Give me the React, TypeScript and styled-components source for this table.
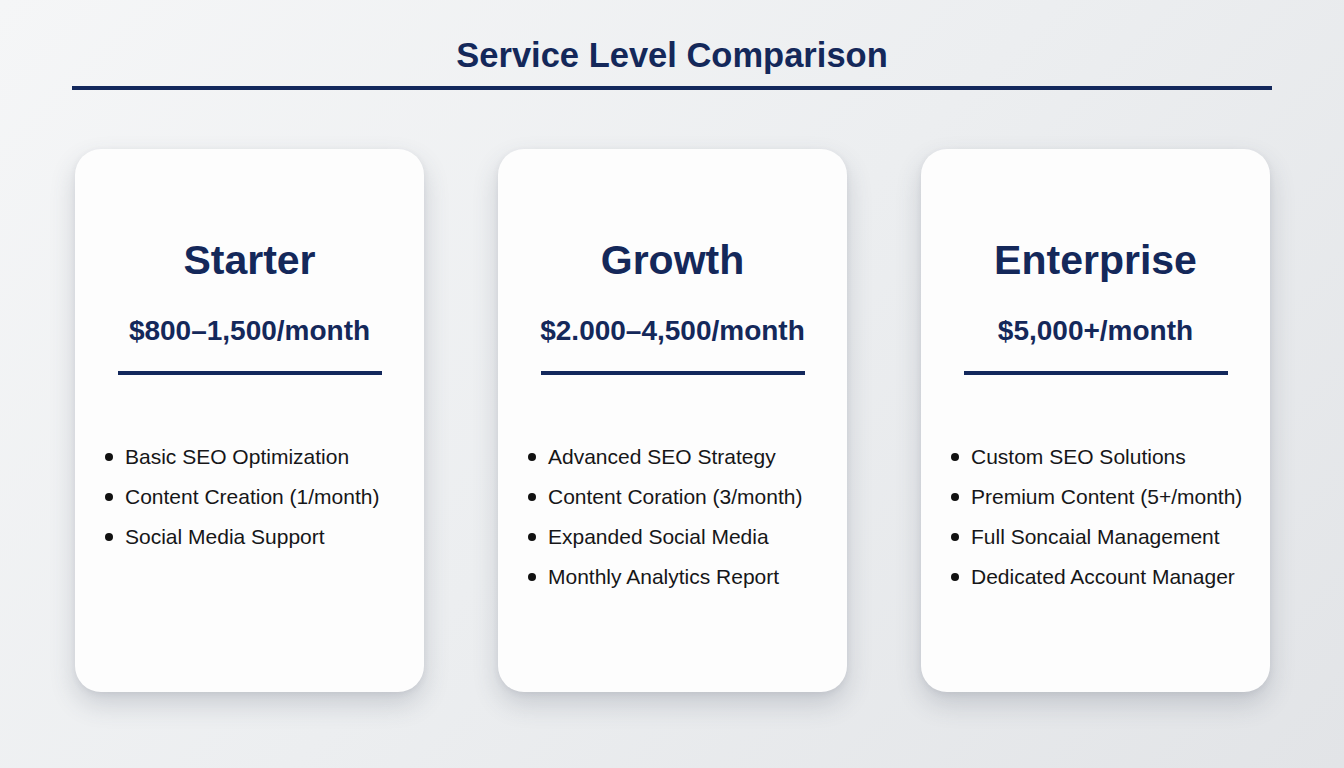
import React from "react";
import styled, { createGlobalStyle } from "styled-components";

const Global = createGlobalStyle`
  html, body { margin: 0; padding: 0; }
  body {
    width: 1344px;
    height: 768px;
    overflow: hidden;
    font-family: "Liberation Sans", Arial, sans-serif;
    background: linear-gradient(135deg, #f5f6f7 0%, #eceef0 50%, #e2e4e7 100%);
  }
`;

const Page = styled.div`
  width: 1344px;
  height: 768px;
  display: flex;
  flex-direction: column;
  align-items: center;
  box-sizing: border-box;
  padding-top: 36px;
`;

const Title = styled.h1`
  margin: 0;
  font-size: 34.5px;
  font-weight: 700;
  color: #14285a;
  line-height: 38px;
`;

const TitleRule = styled.div`
  width: 1200px;
  height: 4px;
  background: #13285c;
  margin-top: 12px;
`;

const Cards = styled.div`
  display: grid;
  grid-template-columns: repeat(3, 349px);
  column-gap: 74px;
  margin-top: 59px;
  margin-left: 1px;
`;

const Card = styled.div`
  height: 543px;
  background: #fdfdfd;
  border-radius: 26px;
  box-shadow: 0 12px 26px rgba(60, 70, 90, 0.2), 0 2px 6px rgba(60, 70, 90, 0.08);
  display: flex;
  flex-direction: column;
  align-items: center;
  box-sizing: border-box;
  padding-top: 88px;
`;

const Name = styled.h2`
  margin: 0;
  font-size: 41px;
  font-weight: 700;
  color: #14285a;
  line-height: 46px;
`;

const Price = styled.div`
  margin-top: 33px;
  font-size: 28px;
  font-weight: 700;
  color: #14285a;
  line-height: 30px;
`;

const Divider = styled.div`
  width: 264px;
  height: 4px;
  background: #13285c;
  margin-top: 25px;
`;

const List = styled.ul`
  list-style: none;
  margin: 70px 0 0 0;
  padding: 0 0 0 30px;
  align-self: stretch;
  display: flex;
  flex-direction: column;
  gap: 16px;
`;

const Item = styled.li`
  display: flex;
  align-items: center;
  font-size: 21px;
  line-height: 24px;
  color: #161618;
  &::before {
    content: "";
    width: 8px;
    height: 8px;
    border-radius: 50%;
    background: #111;
    margin-right: 12px;
    flex-shrink: 0;
  }
`;

const tiers = [
  {
    name: "Starter",
    price: "$800–1,500/month",
    items: ["Basic SEO Optimization", "Content Creation (1/month)", "Social Media Support"],
  },
  {
    name: "Growth",
    price: "$2.000–4,500/month",
    items: [
      "Advanced SEO Strategy",
      "Content Coration (3/month)",
      "Expanded Social Media",
      "Monthly Analytics Report",
    ],
  },
  {
    name: "Enterprise",
    price: "$5,000+/month",
    items: [
      "Custom SEO Solutions",
      "Premium Content (5+/month)",
      "Full Soncaial Management",
      "Dedicated Account Manager",
    ],
  },
];

export default function App() {
  return (
    <>
      <Global />
      <Page>
        <Title>Service Level Comparison</Title>
        <TitleRule />
        <Cards>
          {tiers.map((t) => (
            <Card key={t.name}>
              <Name>{t.name}</Name>
              <Price>{t.price}</Price>
              <Divider />
              <List>
                {t.items.map((i) => (
                  <Item key={i}>{i}</Item>
                ))}
              </List>
            </Card>
          ))}
        </Cards>
      </Page>
    </>
  );
}
